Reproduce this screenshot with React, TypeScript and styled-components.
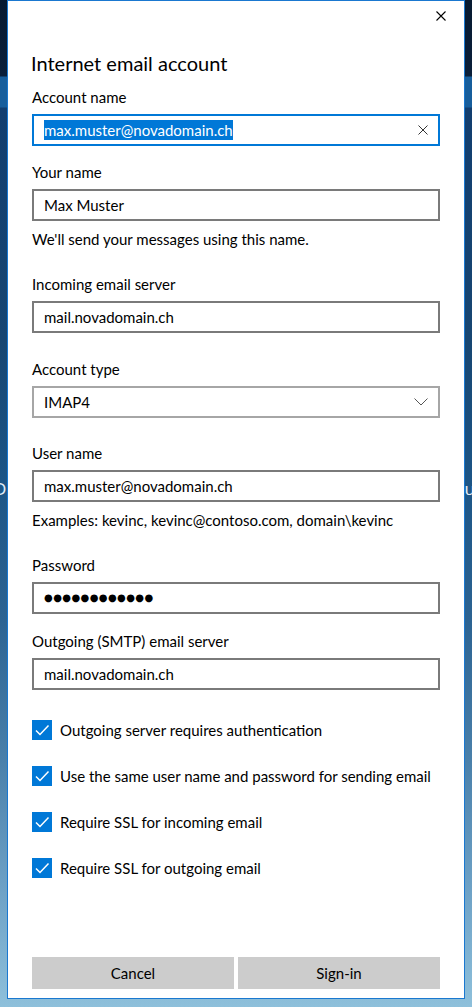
import React from "react";
import styled, { createGlobalStyle } from "styled-components";

const GlobalStyle = createGlobalStyle`
  html, body {
    margin: 0;
    padding: 0;
  }
  body {
    font-family: "Lato", "Noto Sans", "Liberation Sans", sans-serif;
    color: #000;
  }
`;

const CloseIcon = ({ size = 10 }: { size?: number }) => (
  <svg width={size} height={size} viewBox="0 0 10 10">
    <path d="M0.5 0.5 L9.5 9.5 M9.5 0.5 L0.5 9.5" stroke="#000" strokeWidth="1.1" fill="none" />
  </svg>
);

const ClearIcon = () => (
  <svg width="10" height="10" viewBox="0 0 10 10">
    <path d="M0.5 0.5 L9.5 9.5 M9.5 0.5 L0.5 9.5" stroke="#333" strokeWidth="1" fill="none" />
  </svg>
);

const ChevronIcon = () => (
  <svg width="14" height="8" viewBox="0 0 14 8">
    <path d="M0.5 0.5 L7 7 L13.5 0.5" stroke="#555" strokeWidth="1" fill="none" />
  </svg>
);

const CheckIcon = () => (
  <svg width="20" height="20" viewBox="0 0 20 20">
    <path d="M4 10.5 L8 14.5 L16.5 5.5" stroke="#fff" strokeWidth="1.5" fill="none" />
  </svg>
);

interface FieldProps {
  label: string;
  value: string;
  top: number;
  hint?: string;
  password?: boolean;
}

const Field = ({ label, value, top, hint, password }: FieldProps) => (
  <Group $top={top}>
    <Label>{label}</Label>
    <InputBox>
      <InputText $password={password}>{value}</InputText>
    </InputBox>
    {hint && <Hint>{hint}</Hint>}
  </Group>
);

const checks = [
  "Outgoing server requires authentication",
  "Use the same user name and password for sending email",
  "Require SSL for incoming email",
  "Require SSL for outgoing email",
];

const App = () => {
  return (
    <Page>
      <GlobalStyle />
      <BackdropLine>
        <span>D</span>
        <span>u</span>
      </BackdropLine>
      <Dialog>
        <TopBar>
          <CloseButton aria-label="Close">
            <CloseIcon />
          </CloseButton>
        </TopBar>
        <Title>Internet email account</Title>

        <Group $top={10}>
          <Label>Account name</Label>
          <InputBox $focused>
            <Selected>max.muster@novadomain.ch</Selected>
            <Trailing>
              <ClearIcon />
            </Trailing>
          </InputBox>
        </Group>

        <Field
          top={16}
          label="Your name"
          value="Max Muster"
          hint="We'll send your messages using this name."
        />
        <Field top={25} label="Incoming email server" value="mail.novadomain.ch" />

        <Group $top={26}>
          <Label>Account type</Label>
          <InputBox $light>
            <InputText>IMAP4</InputText>
            <Trailing>
              <ChevronIcon />
            </Trailing>
          </InputBox>
        </Group>

        <Field
          top={25}
          label="User name"
          value="max.muster@novadomain.ch"
          hint="Examples: kevinc, kevinc@contoso.com, domain\kevinc"
        />
        <Field top={25} label="Password" value="●●●●●●●●●●●●" password />
        <Field top={17} label="Outgoing (SMTP) email server" value="mail.novadomain.ch" />

        <CheckList>
          {checks.map((c) => (
            <CheckRow key={c}>
              <CheckBox>
                <CheckIcon />
              </CheckBox>
              <CheckLabel>{c}</CheckLabel>
            </CheckRow>
          ))}
        </CheckList>

        <Buttons>
          <Button>Cancel</Button>
          <Button>Sign-in</Button>
        </Buttons>
      </Dialog>
    </Page>
  );
};

export default App;

const Page = styled.div`
  position: relative;
  width: 472px;
  height: 1007px;
  overflow: hidden;
  box-sizing: border-box;
  padding: 0 7px 8px 7px;
  background: linear-gradient(
    180deg,
    #071a31 0px,
    #0a1f3a 76px,
    #175e9c 77px,
    #175e9c 107px,
    #123e6f 108px,
    #174672 340px,
    #1c5586 480px,
    #2c6392 620px,
    #4a80aa 760px,
    #6b9fc4 880px,
    #8ec0db 1007px
  );
`;

const BackdropLine = styled.div`
  position: absolute;
  left: -6px;
  right: -3px;
  top: 477px;
  display: flex;
  justify-content: space-between;
  font-size: 17px;
  color: #e4eef7;
  font-family: "Noto Sans", sans-serif;
`;

const Dialog = styled.div`
  position: relative;
  z-index: 1;
  height: 100%;
  box-sizing: border-box;
  background: #fff;
  border: 1px solid #1a78d0;
  padding: 0 24px 9px 24px;
  display: flex;
  flex-direction: column;
`;

const TopBar = styled.div`
  display: flex;
  justify-content: flex-end;
  height: 32px;
  margin-right: -24px;
`;

const CloseButton = styled.div`
  width: 46px;
  height: 32px;
  display: flex;
  align-items: center;
  justify-content: center;
  margin-top: -1px;
`;

const Title = styled.div`
  font-size: 20px;
  line-height: 28px;
  margin-top: 16px;
  margin-left: -1px;
`;

const Group = styled.div<{ $top: number }>`
  margin-top: ${(p) => p.$top}px;
  display: flex;
  flex-direction: column;
`;

const Label = styled.div`
  font-size: 15px;
  line-height: 20px;
  margin-bottom: 7px;
`;

const InputBox = styled.div<{ $focused?: boolean; $light?: boolean }>`
  height: 32px;
  box-sizing: border-box;
  border: 2px solid
    ${(p) => (p.$focused ? "#0078d7" : p.$light ? "#a6a6a6" : "#7a7a7a")};
  display: flex;
  align-items: center;
  padding: 0 8px 0 10px;
`;

const InputText = styled.span<{ $password?: boolean }>`
  flex: 1;
  font-size: ${(p) => (p.$password ? "10px" : "15px")};
  letter-spacing: ${(p) => (p.$password ? "0.4px" : "0")};
  line-height: 20px;
  font-family: ${(p) => (p.$password ? '"DejaVu Sans", sans-serif' : "inherit")};
`;

const Selected = styled.span`
  font-size: 15px;
  line-height: 20px;
  background: #0078d7;
  color: #fff;
  margin-right: auto;
`;

const Trailing = styled.span`
  display: flex;
  align-items: center;
  margin-right: 2px;
`;

const Hint = styled.div`
  font-size: 15px;
  line-height: 20px;
  margin-top: 8px;
`;

const CheckList = styled.div`
  margin-top: 30px;
  display: flex;
  flex-direction: column;
  gap: 26px;
`;

const CheckRow = styled.div`
  display: flex;
  align-items: center;
  gap: 8px;
`;

const CheckBox = styled.div`
  width: 20px;
  height: 20px;
  background: #0078d7;
  flex-shrink: 0;
`;

const CheckLabel = styled.span`
  font-size: 15px;
  line-height: 20px;
`;

const Buttons = styled.div`
  margin-top: auto;
  display: grid;
  grid-template-columns: 1fr 1fr;
  gap: 4px;
`;

const Button = styled.div`
  height: 32px;
  background: #cccccc;
  display: flex;
  align-items: center;
  justify-content: center;
  font-size: 15px;
`;
